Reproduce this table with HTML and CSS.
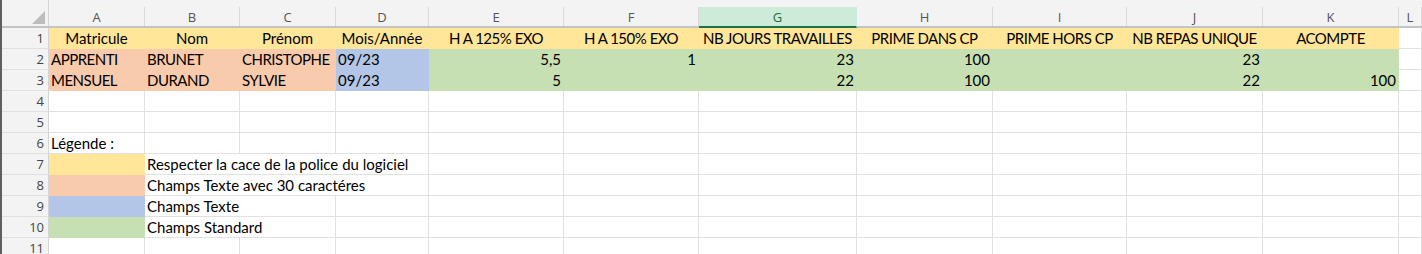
FILE: index.html
```html
<!DOCTYPE html>
<html lang="fr">
<head>
<meta charset="utf-8">
<title>Feuil1</title>
<link rel="stylesheet" href="styles.css">
</head>
<body>
<div class="sheet">
  <div class="row colheads">
    <div class="corner"><span class="tri"></span></div>
    <div class="ch">A</div>
    <div class="ch">B</div>
    <div class="ch">C</div>
    <div class="ch">D</div>
    <div class="ch">E</div>
    <div class="ch">F</div>
    <div class="ch sel">G</div>
    <div class="ch">H</div>
    <div class="ch">I</div>
    <div class="ch">J</div>
    <div class="ch">K</div>
    <div class="ch">L</div>
  </div>

  <div class="row">
    <div class="rh">1</div>
    <div class="c yellow center">Matricule</div>
    <div class="c yellow center">Nom</div>
    <div class="c yellow center">Prénom</div>
    <div class="c yellow center">Mois/Année</div>
    <div class="c yellow center caps">H A 125% EXO</div>
    <div class="c yellow center caps">H A 150% EXO</div>
    <div class="c yellow center caps">NB JOURS TRAVAILLES</div>
    <div class="c yellow center caps">PRIME DANS CP</div>
    <div class="c yellow center caps">PRIME HORS CP</div>
    <div class="c yellow center caps">NB REPAS UNIQUE</div>
    <div class="c yellow center caps">ACOMPTE</div>
    <div class="c"></div>
  </div>

  <div class="row">
    <div class="rh">2</div>
    <div class="c peach caps">APPRENTI</div>
    <div class="c peach caps">BRUNET</div>
    <div class="c peach caps">CHRISTOPHE</div>
    <div class="c blue">09/23</div>
    <div class="c green num">5,5</div>
    <div class="c green num">1</div>
    <div class="c green num">23</div>
    <div class="c green num">100</div>
    <div class="c green num"></div>
    <div class="c green num">23</div>
    <div class="c green num"></div>
    <div class="c"></div>
  </div>

  <div class="row">
    <div class="rh">3</div>
    <div class="c peach caps">MENSUEL</div>
    <div class="c peach caps">DURAND</div>
    <div class="c peach caps">SYLVIE</div>
    <div class="c blue">09/23</div>
    <div class="c green num">5</div>
    <div class="c green num"></div>
    <div class="c green num">22</div>
    <div class="c green num">100</div>
    <div class="c green num"></div>
    <div class="c green num">22</div>
    <div class="c green num">100</div>
    <div class="c"></div>
  </div>

  <div class="row">
    <div class="rh">4</div>
    <div class="c"></div><div class="c"></div><div class="c"></div><div class="c"></div>
    <div class="c"></div><div class="c"></div><div class="c"></div><div class="c"></div>
    <div class="c"></div><div class="c"></div><div class="c"></div><div class="c"></div>
  </div>

  <div class="row">
    <div class="rh">5</div>
    <div class="c"></div><div class="c"></div><div class="c"></div><div class="c"></div>
    <div class="c"></div><div class="c"></div><div class="c"></div><div class="c"></div>
    <div class="c"></div><div class="c"></div><div class="c"></div><div class="c"></div>
  </div>

  <div class="row">
    <div class="rh">6</div>
    <div class="c">Légende :</div>
    <div class="c"></div><div class="c"></div><div class="c"></div>
    <div class="c"></div><div class="c"></div><div class="c"></div><div class="c"></div>
    <div class="c"></div><div class="c"></div><div class="c"></div><div class="c"></div>
  </div>

  <div class="row">
    <div class="rh">7</div>
    <div class="c yellow"></div>
    <div class="c span3">Respecter la cace de la police du logiciel</div>
    <div class="c"></div><div class="c"></div><div class="c"></div><div class="c"></div>
    <div class="c"></div><div class="c"></div><div class="c"></div><div class="c"></div>
  </div>

  <div class="row">
    <div class="rh">8</div>
    <div class="c peach"></div>
    <div class="c span3">Champs Texte avec 30 caractéres</div>
    <div class="c"></div><div class="c"></div><div class="c"></div><div class="c"></div>
    <div class="c"></div><div class="c"></div><div class="c"></div><div class="c"></div>
  </div>

  <div class="row">
    <div class="rh">9</div>
    <div class="c blue"></div>
    <div class="c span2">Champs Texte</div>
    <div class="c"></div>
    <div class="c"></div><div class="c"></div><div class="c"></div><div class="c"></div>
    <div class="c"></div><div class="c"></div><div class="c"></div><div class="c"></div>
  </div>

  <div class="row">
    <div class="rh">10</div>
    <div class="c green"></div>
    <div class="c span2">Champs Standard</div>
    <div class="c"></div>
    <div class="c"></div><div class="c"></div><div class="c"></div><div class="c"></div>
    <div class="c"></div><div class="c"></div><div class="c"></div><div class="c"></div>
  </div>

  <div class="row">
    <div class="rh">11</div>
    <div class="c"></div><div class="c"></div><div class="c"></div><div class="c"></div>
    <div class="c"></div><div class="c"></div><div class="c"></div><div class="c"></div>
    <div class="c"></div><div class="c"></div><div class="c"></div><div class="c"></div>
  </div>
</div>
</body>
</html>
```

FILE: styles.css
```css
html, body {
  margin: 0;
  padding: 0;
  background: #ffffff;
  overflow: hidden;
}

.sheet {
  --cols: 47px 96px 95px 96px 93px 135px 135px 158px 136px 134px 136px 136px 1fr;
  border-left: 2px solid #5f5f5f;
  height: 254px;
  font-family: "Lato", "Open Sans", sans-serif;
  font-size: 15px;
  color: #000;
}

.row {
  display: grid;
  grid-template-columns: var(--cols);
  grid-template-rows: 21px;
  height: 21px;
}

/* column letters */
.colheads {
  grid-template-rows: 26px;
  height: 26px;
  background: #f3f3f3;
  border-bottom: 2px solid #c4c4c4;
  align-items: end;
}

.corner {
  height: 26px;
  border-right: 1px solid #d4d4d4;
  box-sizing: border-box;
  position: relative;
}

.corner .tri {
  position: absolute;
  right: 3px;
  bottom: 2px;
  width: 0;
  height: 0;
  border-left: 13px solid transparent;
  border-bottom: 13px solid #bdbdbd;
}

.ch {
  height: 19px;
  box-sizing: border-box;
  border-right: 1px solid #dadada;
  display: flex;
  align-items: center;
  justify-content: center;
  font-family: "Open Sans", "Noto Sans", sans-serif;
  font-size: 13px;
  color: #555;
}

.ch.sel {
  background: #cdebd9;
  color: #1d6b40;
  height: 21px;
  margin-bottom: -2px;
  border-bottom: 2px solid #1e7145;
  border-right-color: #cdebd9;
}

/* row numbers */
.rh {
  height: 21px;
  background: #f3f3f3;
  border-right: 1px solid #d4d4d4;
  border-bottom: 1px solid #e0e0e0;
  box-sizing: border-box;
  text-align: right;
  padding: 1px 4px 0 0;
  font-family: "Open Sans", "Noto Sans", sans-serif;
  font-size: 13px;
  line-height: 19px;
  color: #444;
}

/* cells */
.c {
  height: 21px;
  box-sizing: border-box;
  border-right: 1px solid #e1e1e1;
  border-bottom: 1px solid #e1e1e1;
  padding: 1px 2px 0 2px;
  line-height: 19px;
  white-space: nowrap;
  overflow: visible;
}

.caps { letter-spacing: -0.5px; }
.center { text-align: center; }
.num { text-align: right; }
.span2 { grid-column: span 2; }
.span3 { grid-column: span 3; }

.yellow, .peach, .blue, .green {
  border-color: transparent;
}
.yellow { background: #ffe699; }
.peach  { background: #f8cbad; }
.blue   { background: #b4c6e7; }
.green  { background: #c6e0b4; }
```
